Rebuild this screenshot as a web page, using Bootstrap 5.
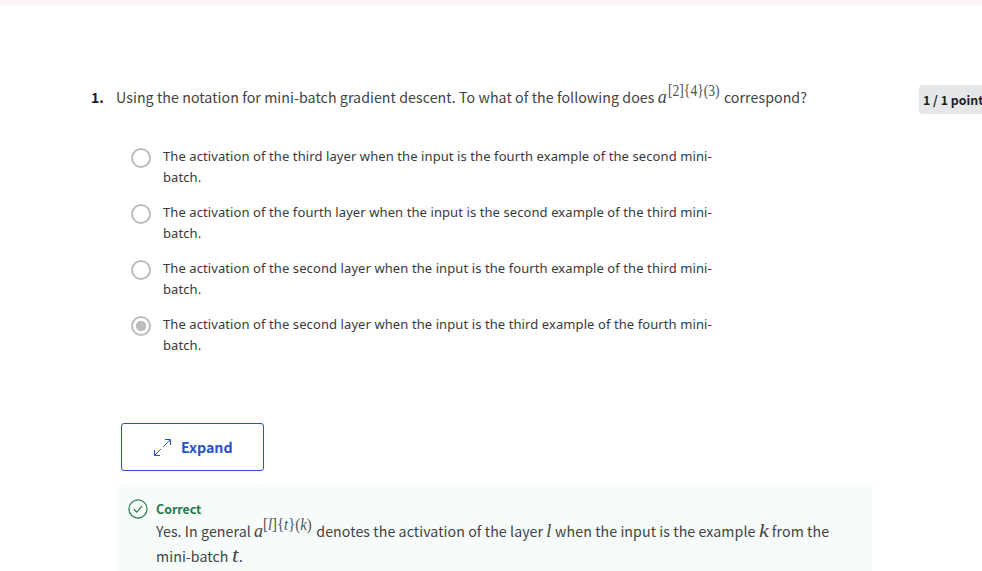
<!DOCTYPE html>
<html lang="en">
<head>
<meta charset="utf-8">
<meta name="viewport" content="width=device-width, initial-scale=1">
<title>Quiz feedback</title>
<link href="https://cdn.jsdelivr.net/npm/bootstrap@5.3.0/dist/css/bootstrap.min.css" rel="stylesheet">
<style>
body{font-family:"Noto Sans CJK SC","Noto Sans CJK JP",sans-serif;font-size:14.2px;line-height:24px;color:#404345;height:571px;overflow:hidden;background:#fff}
.top-strip{height:5px;background:#fbf5f5}
.question-row{margin-top:80px;padding-left:91px;height:29px}
.q-number{width:25px;font-weight:700;color:#1f1f1f;font-size:14px}
.q-text{white-space:nowrap;letter-spacing:.062px}
.points{width:63px;height:29px;padding-left:4px;background:#e5e7e8;border-radius:4px 0 0 4px;font-size:12.4px;line-height:31px;font-weight:700;color:#1f1f1f;white-space:nowrap}
.math{font-family:"Liberation Serif",serif;font-style:italic;line-height:0;font-size:18px;letter-spacing:0}
.math sup{display:inline-block;width:53px;font-size:17px;line-height:0;top:-.42em;font-style:normal;transform:scaleX(.8);transform-origin:0 50%;white-space:nowrap;margin-left:1px;color:#505355}
.fb-text .math sup{width:50px;margin-left:0;transform:scaleX(.87)}
.math-l{margin:0 .5px 0 0}
.math-k{display:inline-block;font-size:19px;transform:scaleX(1.15);transform-origin:0 50%;margin-right:1.5px}
.math-t{display:inline-block;font-size:20px;transform:scaleX(1.15);transform-origin:0 50%;margin-right:1.5px}
.choices{margin:32px 0 0 131px;width:600px;gap:14px;font-family:"Noto Sans",sans-serif;font-size:13px;line-height:21px;letter-spacing:.088px;color:#373a3c}
.choice{gap:12px;height:42px}
.choice .form-check-input{width:20px;height:20px;margin:2px 0 0;border:2px solid #bdbdbd;background:#fff;opacity:1;flex:none}
.choice .form-check-input:checked{background:radial-gradient(circle,#bdbdbd 4.8px,#fff 5.5px)}
.choice label{white-space:nowrap;opacity:1!important}
.btn-expand{--bs-btn-color:#2a52cb;--bs-btn-border-color:#2a52cb;margin:67px 0 0 121px;width:143px;height:48px;border-radius:3px;font-weight:700;font-size:14.2px;padding:2px 0 0 31px;gap:9px}
.btn-expand svg{margin-top:-1px}
.feedback{margin:16px 0 0 116px;width:756px;height:90px;background:#f7fbfa;padding:12px 0 0 12px;gap:8px}
.fb-title{color:#257a4b;font-weight:700;font-size:12.4px;line-height:20px}
.fb-text{line-height:25px;white-space:nowrap;letter-spacing:.068px}
</style>
<script src="https://cdn.jsdelivr.net/npm/bootstrap@5.3.0/dist/js/bootstrap.bundle.min.js"></script>
</head>
<body>
<div class="top-strip"></div>
<main>
<div class="question-row d-flex justify-content-between">
<div class="d-flex"><div class="q-number">1.</div>
<div class="q-text">Using the notation for mini-batch gradient descent. To what of the following does <span class="math">a<sup>[2]{4}(3)</sup></span> correspond?</div></div>
<div class="points">1 / 1 point</div>
</div>
<div class="choices d-flex flex-column">
<div class="choice d-flex"><input class="form-check-input" type="radio" name="answer" id="a1" disabled><label for="a1">The activation of the third layer when the input is the fourth example of the second mini-<br>batch.</label></div>
<div class="choice d-flex"><input class="form-check-input" type="radio" name="answer" id="a2" disabled><label for="a2">The activation of the fourth layer when the input is the second example of the third mini-<br>batch.</label></div>
<div class="choice d-flex"><input class="form-check-input" type="radio" name="answer" id="a3" disabled><label for="a3">The activation of the second layer when the input is the fourth example of the third mini-<br>batch.</label></div>
<div class="choice d-flex"><input class="form-check-input" type="radio" name="answer" id="a4" disabled checked><label for="a4">The activation of the second layer when the input is the third example of the fourth mini-<br>batch.</label></div>
</div>
<button type="button" class="btn btn-expand d-flex align-items-center">
<svg width="19" height="19" viewBox="0 0 19 19" fill="none" stroke="#2a52cb" stroke-width="1"><path d="M1.5 17.5 8 11M10.5 8.5 17.5 1.5M12 1.5h5.5V7M1.5 12v5.5H7"/></svg>
<span>Expand</span></button>
<section class="feedback d-flex">
<svg width="20" height="20" viewBox="0 0 20 20" fill="none" stroke="#257a4b" stroke-width="1.2" class="flex-shrink-0"><circle cx="10" cy="10" r="9.1"/><path d="M5.8 10.3 8.8 13.1 14 7.1"/></svg>
<div><div class="fb-title">Correct</div>
<div class="fb-text">Yes. In general <span class="math">a<sup>[<i>l</i>]{<i>t</i>}(<i>k</i>)</sup></span> denotes the activation of the layer <span class="math math-l">l</span> when the input is the example <span class="math math-k">k</span> from the<br>mini-batch <span class="math math-t">t</span>.</div></div>
</section>
</main>
</body>
</html>
